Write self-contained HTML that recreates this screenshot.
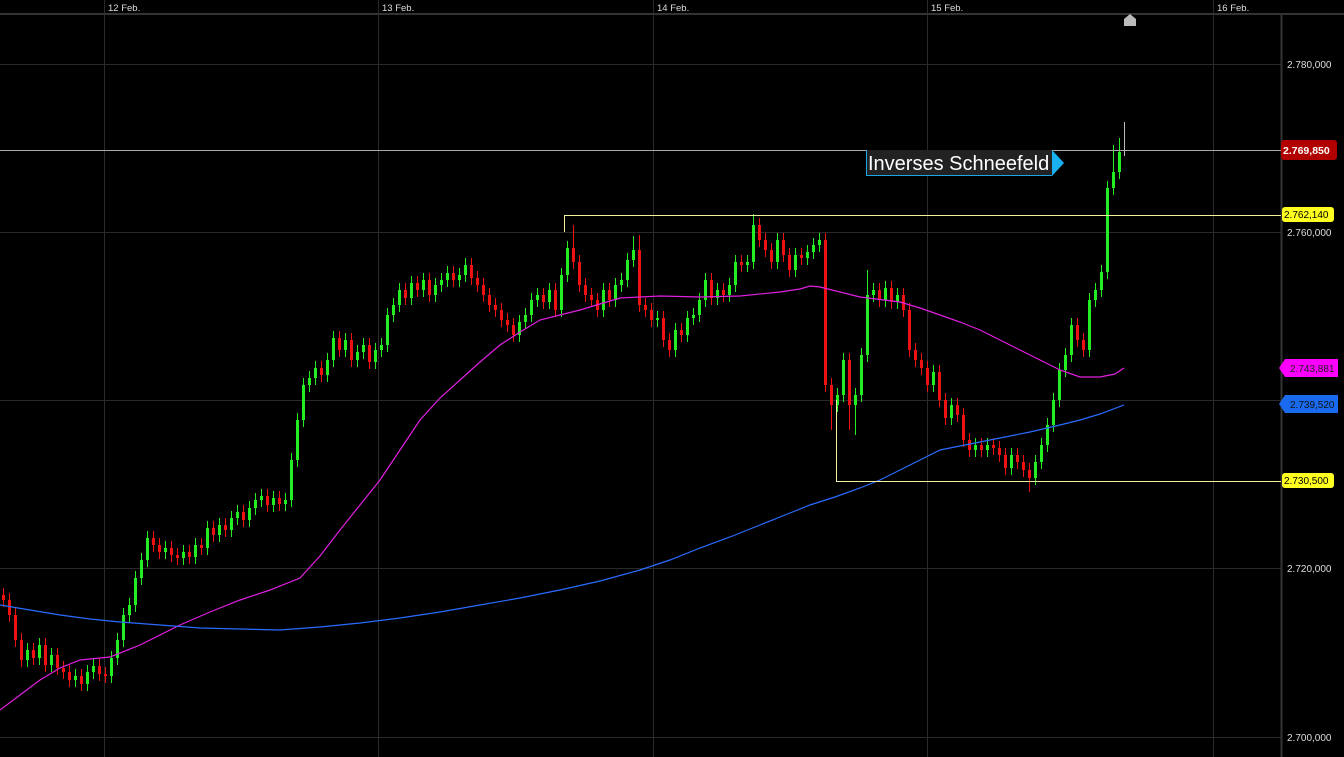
<!DOCTYPE html>
<html><head><meta charset="utf-8"><style>
html,body{margin:0;padding:0;background:#000;width:1344px;height:757px;overflow:hidden;font-family:"Liberation Sans",sans-serif}
svg{position:absolute;left:0;top:0}
</style></head><body>
<svg width="1344" height="757" xmlns="http://www.w3.org/2000/svg">
<rect width="1344" height="757" fill="#000"/>
<g stroke="#2a2a2a" stroke-width="1">
<line x1="104.5" y1="0" x2="104.5" y2="757"/><line x1="378.5" y1="0" x2="378.5" y2="757"/>
<line x1="653.5" y1="0" x2="653.5" y2="757"/><line x1="927.5" y1="0" x2="927.5" y2="757"/>
<line x1="1213.5" y1="0" x2="1213.5" y2="757"/>
<line x1="0" y1="64.5" x2="1281" y2="64.5"/><line x1="0" y1="232.5" x2="1281" y2="232.5"/>
<line x1="0" y1="400.5" x2="1281" y2="400.5"/><line x1="0" y1="568.5" x2="1281" y2="568.5"/>
<line x1="0" y1="737.5" x2="1281" y2="737.5"/>
</g>
<line x1="0" y1="14" x2="1344" y2="14" stroke="#333" stroke-width="2"/>
<line x1="1281.5" y1="14" x2="1281.5" y2="757" stroke="#333" stroke-width="2"/>
<g fill="#ddd" font-size="9.5">
<text x="108" y="11">12 Feb.</text><text x="382" y="11">13 Feb.</text><text x="657" y="11">14 Feb.</text>
<text x="931" y="11">15 Feb.</text><text x="1217" y="11">16 Feb.</text>
</g>
<g fill="#ddd" font-size="10">
<text x="1287" y="68">2.780,000</text><text x="1287" y="236">2.760,000</text>
<text x="1287" y="572">2.720,000</text><text x="1287" y="741">2.700,000</text>
</g>
<path fill="none" stroke="#ee1111" stroke-width="1" d="M3.5 588V607M9.5 593V622M15.5 608V647M21.5 633V667M33.5 643V665M45.5 638V672M57.5 648V675M63.5 661V679M69.5 665V687M81.5 669V691M99.5 659V681M105.5 667V683M153.5 531V552M159.5 538V559M171.5 541V562M177.5 548V565M189.5 545V564M201.5 538V555M213.5 521V542M225.5 518V537M243.5 505V527M267.5 489V512M279.5 491V511M321.5 361V382M339.5 331V357M351.5 333V367M369.5 338V369M405.5 283V305M417.5 276V297M429.5 273V302M453.5 266V287M471.5 258V285M477.5 271V292M483.5 278V302M489.5 288V312M495.5 298V317M501.5 303V327M507.5 313V332M513.5 318V342M543.5 288V309M555.5 283V317M573.5 225V269M579.5 255V292M585.5 278V302M591.5 288V307M597.5 293V317M609.5 283V307M639.5 235V312M645.5 298V317M651.5 303V327M663.5 311V347M669.5 333V357M681.5 323V342M711.5 273V305M723.5 283V302M741.5 255V272M759.5 218V247M765.5 233V257M771.5 243V269M783.5 233V262M789.5 248V277M801.5 248V265M825.5 233V392M831.5 378V430M849.5 353V430M879.5 283V307M891.5 281V309M903.5 288V317M909.5 303V357M915.5 343V367M921.5 353V375M927.5 361V392M939.5 365V407M945.5 393V425M957.5 398V422M963.5 408V447M969.5 433V457M981.5 438V457M993.5 438V455M999.5 441V462M1005.5 448V475M1017.5 448V469M1023.5 455V477M1029.5 463V492M1077.5 318V347M1083.5 333V357"/>
<path fill="none" stroke="#ee1111" stroke-width="3" d="M3.5 595V600M9.5 600V615M15.5 615V640M21.5 640V660M33.5 650V658M45.5 645V665M57.5 655V668M63.5 668V672M69.5 672V680M81.5 676V684M99.5 666V674M105.5 674V676M153.5 538V545M159.5 545V552M171.5 548V555M177.5 555V558M189.5 552V557M201.5 545V548M213.5 528V535M225.5 525V530M243.5 512V520M267.5 496V505M279.5 498V504M321.5 368V375M339.5 338V350M351.5 340V360M369.5 345V362M405.5 290V298M417.5 283V290M429.5 280V295M453.5 273V280M471.5 265V278M477.5 278V285M483.5 285V295M489.5 295V305M495.5 305V310M501.5 310V320M507.5 320V325M513.5 325V335M543.5 295V302M555.5 290V310M573.5 248V262M579.5 262V285M585.5 285V295M591.5 295V300M597.5 300V310M609.5 290V300M639.5 250V305M645.5 305V310M651.5 310V320M663.5 318V340M669.5 340V350M681.5 330V335M711.5 280V298M723.5 290V295M741.5 262V265M759.5 225V240M765.5 240V250M771.5 250V262M783.5 240V255M789.5 255V270M801.5 255V258M825.5 240V385M831.5 385V405M849.5 360V405M879.5 290V300M891.5 288V302M903.5 295V310M909.5 310V350M915.5 350V360M921.5 360V368M927.5 368V385M939.5 372V400M945.5 400V418M957.5 405V415M963.5 415V440M969.5 440V450M981.5 445V450M993.5 445V448M999.5 448V455M1005.5 455V468M1017.5 455V462M1023.5 462V470M1029.5 470V478M1077.5 325V340M1083.5 340V350"/>
<path fill="none" stroke="#22ee22" stroke-width="1" d="M27.5 643V667M39.5 638V665M51.5 648V672M75.5 669V687M87.5 665V691M93.5 659V679M111.5 651V683M117.5 633V665M123.5 608V647M129.5 598V622M135.5 571V612M141.5 553V585M147.5 531V567M165.5 541V559M183.5 545V565M195.5 538V564M207.5 521V555M219.5 518V542M231.5 511V537M237.5 505V525M249.5 501V527M255.5 493V515M261.5 489V507M273.5 491V512M285.5 493V511M291.5 453V507M297.5 413V467M303.5 378V427M309.5 371V392M315.5 361V385M327.5 353V382M333.5 331V367M345.5 333V357M357.5 345V367M363.5 338V359M375.5 343V369M381.5 338V357M387.5 308V352M393.5 298V322M399.5 283V312M411.5 276V305M423.5 273V297M435.5 278V302M441.5 273V292M447.5 266V287M459.5 268V287M465.5 258V282M519.5 315V342M525.5 308V329M531.5 293V322M537.5 288V307M549.5 283V309M561.5 268V317M567.5 241V282M603.5 283V317M615.5 278V307M621.5 273V292M627.5 253V287M633.5 236V267M657.5 311V327M675.5 323V357M687.5 311V342M693.5 308V325M699.5 293V322M705.5 273V307M717.5 283V305M729.5 278V302M735.5 255V292M747.5 255V272M753.5 214V269M777.5 233V269M795.5 248V277M807.5 245V265M813.5 238V259M819.5 233V252M837.5 388V412M843.5 353V402M855.5 388V435M861.5 348V402M867.5 270V362M873.5 283V302M885.5 281V307M897.5 288V309M933.5 365V392M951.5 398V425M975.5 438V457M987.5 438V457M1011.5 448V475M1035.5 455V485M1041.5 438V469M1047.5 418V452M1053.5 393V432M1059.5 363V407M1065.5 348V377M1071.5 318V362M1089.5 293V357M1095.5 283V307M1101.5 265V297M1107.5 181V279M1113.5 145V195M1119.5 138V179"/>
<path fill="none" stroke="#22ee22" stroke-width="3" d="M27.5 650V660M39.5 645V658M51.5 655V665M75.5 676V680M87.5 672V684M93.5 666V672M111.5 658V676M117.5 640V658M123.5 615V640M129.5 605V615M135.5 578V605M141.5 560V578M147.5 538V560M165.5 548V552M183.5 552V558M195.5 545V557M207.5 528V548M219.5 525V535M231.5 518V530M237.5 512V518M249.5 508V520M255.5 500V508M261.5 496V500M273.5 498V505M285.5 500V504M291.5 460V500M297.5 420V460M303.5 385V420M309.5 378V385M315.5 368V378M327.5 360V375M333.5 338V360M345.5 340V350M357.5 352V360M363.5 345V352M375.5 350V362M381.5 345V350M387.5 315V345M393.5 305V315M399.5 290V305M411.5 283V298M423.5 280V290M435.5 285V295M441.5 280V285M447.5 273V280M459.5 275V280M465.5 265V275M519.5 322V335M525.5 315V322M531.5 300V315M537.5 295V300M549.5 290V302M561.5 275V310M567.5 248V275M603.5 290V310M615.5 285V300M621.5 280V285M627.5 260V280M633.5 250V260M657.5 318V320M675.5 330V350M687.5 318V335M693.5 315V318M699.5 300V315M705.5 280V300M717.5 290V298M729.5 285V295M735.5 262V285M747.5 262V265M753.5 225V262M777.5 240V262M795.5 255V270M807.5 252V258M813.5 245V252M819.5 240V245M837.5 395V405M843.5 360V395M855.5 395V405M861.5 355V395M867.5 295V355M873.5 290V295M885.5 288V300M897.5 295V302M933.5 372V385M951.5 405V418M975.5 445V450M987.5 445V450M1011.5 455V468M1035.5 462V478M1041.5 445V462M1047.5 425V445M1053.5 400V425M1059.5 370V400M1065.5 355V370M1071.5 325V355M1089.5 300V350M1095.5 290V300M1101.5 272V290M1107.5 188V272M1113.5 172V188M1119.5 152V172"/>
<path fill="none" stroke="#bbb" stroke-width="1" d="M1124.5 122V156M1122 150.5H1127"/>
<polyline fill="none" stroke="#e020e0" stroke-width="1.2" points="0,710 20,695 40,680 60,668 80,660 110,657 140,645 180,625 210,612 240,600 270,590 300,578 320,556 340,530 360,505 380,480 400,450 420,420 440,398 460,380 480,362 500,345 520,332 540,320 560,315 580,310 600,304 620,298 660,296 700,297 740,296 780,292 800,289 810,286 820,287 840,292 860,297 900,302 920,308 940,315 960,322 980,330 1000,340 1020,350 1040,360 1060,370 1080,377 1100,377 1115,374 1124,368"/>
<polyline fill="none" stroke="#2a6cff" stroke-width="1.2" points="0,605 30,610 60,615 90,619 120,622 160,625 200,628 240,629 280,630 320,627 360,623 400,618 440,612 480,605 520,598 560,590 600,581 640,570 670,560 700,548 730,537 760,525 790,513 810,505 835,497 860,488 880,480 900,470 920,460 940,450 970,444 1000,438 1030,432 1060,425 1080,420 1100,414 1124,405"/>
<line x1="0" y1="150.5" x2="1281" y2="150.5" stroke="#aaa"/>
<polyline points="564.5,232 564.5,215.5 1281,215.5" fill="none" stroke="#f0f0a0"/>
<polyline points="836.5,400 836.5,481.5 1281,481.5" fill="none" stroke="#f0f0a0"/>
<rect x="866" y="150" width="186" height="26" fill="#222"/>
<polyline points="866.5,150 866.5,175.5 1052,175.5" fill="none" stroke="#1aa6e8"/>
<polygon points="1052,150 1064,163 1052,176" fill="#1ab0f0"/>
<text x="868" y="170" fill="#fff" font-size="20">Inverses Schneefeld</text>
<polygon points="1124,26 1124,19 1130,14 1136,19 1136,26" fill="#bbb"/>
<rect x="1281" y="140" width="56" height="20" rx="3" fill="#b00000"/>
<text x="1283" y="154" fill="#fff" font-size="10.5" font-weight="bold">2.769,850</text>
<rect x="1282" y="207" width="52" height="15" rx="3" fill="#ffff20"/>
<text x="1284" y="218" fill="#000" font-size="10">2.762,140</text>
<polygon points="1279,368 1285,359 1338,359 1338,377 1285,377" fill="#ff00ff"/>
<text x="1290" y="372" fill="#222" font-size="10">2.743,881</text>
<polygon points="1279,404 1285,395 1338,395 1338,413 1285,413" fill="#1a6af0"/>
<text x="1290" y="408" fill="#111" font-size="10">2.739,520</text>
<rect x="1282" y="473" width="52" height="15" rx="3" fill="#ffff20"/>
<text x="1284" y="484" fill="#000" font-size="10">2.730,500</text>
</svg>
</body></html>
